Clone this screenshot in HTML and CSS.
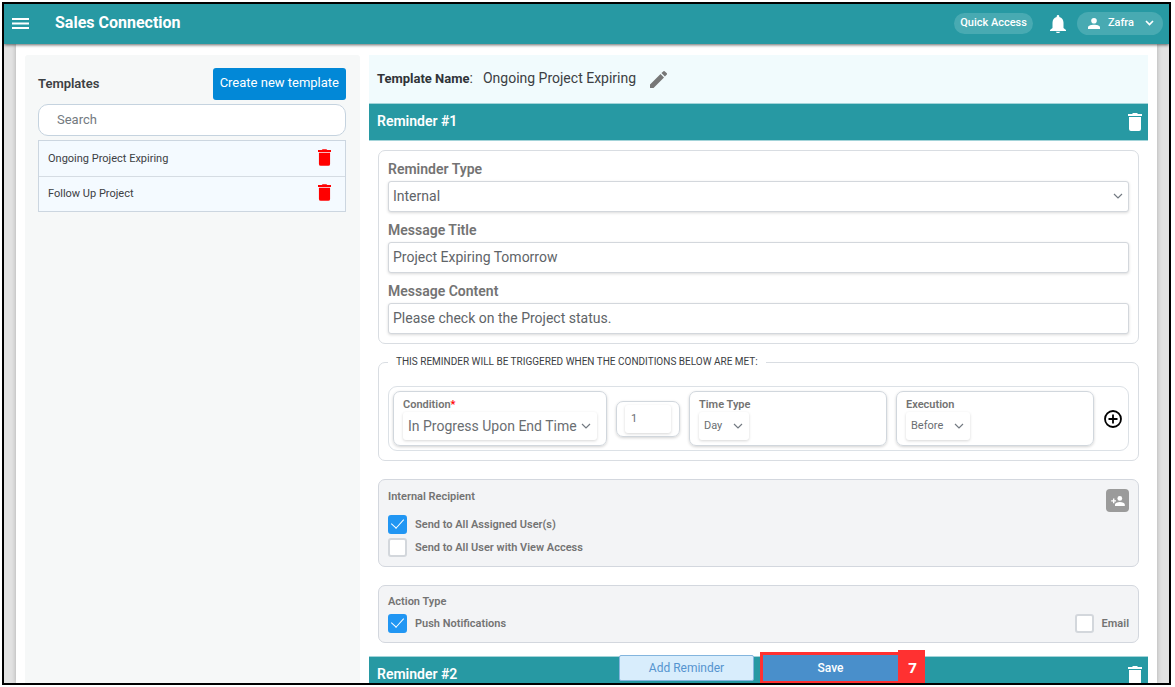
FILE: index.html
```html
<!DOCTYPE html>
<html lang="en">
<head>
<meta charset="utf-8">
<meta name="viewport" content="width=device-width, initial-scale=1">
<title>Sales Connection</title>
<link rel="stylesheet" href="styles.css">
</head>
<body>
<svg class="sprite" aria-hidden="true">
  <symbol id="trash" viewBox="0 0 14 18"><path d="M1 4h12v12a2 2 0 0 1-2 2H3a2 2 0 0 1-2-2zM0 1h4l1-1h4l1 1h4v2H0z"/></symbol>
  <symbol id="chevron" viewBox="0 0 10 6"><path d="M1 1l4 4 4-4" fill="none" stroke="currentColor" stroke-width="1.2"/></symbol>
</svg>
<div class="frame">
  <header class="topbar">
    <button class="icon-btn" aria-label="Menu"><svg width="17" height="11" viewBox="0 0 17 11"><path d="M0 0h17v2H0zM0 4.500h17v2H0zM0 9h17v2H0z"/></svg></button>
    <h1 class="brand">Sales Connection</h1>
    <button class="pill quick">Quick Access</button>
    <button class="icon-btn bell" aria-label="Notifications"><svg width="16" height="18" viewBox="0 0 16 18"><path d="M8 0c.8 0 1.300.6 1.300 1.400v.6C12 2.600 13.500 5 13.500 7.700V13L16 15v1H0v-1l2.500-2V7.700C2.500 5 4 2.600 6.700 2v-.6C6.700.6 7.200 0 8 0zM5.800 16.700h4.400c-.2.800-1.100 1.300-2.200 1.300s-2-.5-2.200-1.300z"/></svg></button>
    <button class="pill user">
      <svg width="12" height="11" viewBox="0 0 12 11"><circle cx="6" cy="2.800" r="2.800"/><path d="M0 11V9.500C0 7.500 3 6.700 6 6.700s6 .8 6 2.800V11z"/></svg>
      <span>Zafra</span>
      <svg class="caret" width="9" height="6" viewBox="0 0 9 6"><path d="M1 1l3.500 3.500L8 1" fill="none" stroke="currentColor" stroke-width="1.700"/></svg>
    </button>
  </header>

  <div class="page">
    <aside class="sidebar">
      <div class="sidebar-head">
        <h2 class="sidebar-title">Templates</h2>
        <button class="create">Create new template</button>
      </div>
      <input class="search" type="search" placeholder="Search" aria-label="Search templates">
      <ul class="templates">
        <li class="template"><span>Ongoing Project Expiring</span><button class="icon-btn danger" aria-label="Delete Ongoing Project Expiring"><svg width="13" height="17" viewBox="0 0 13 17"><use href="#trash" width="13" height="17"/></svg></button></li>
        <li class="template"><span>Follow Up Project</span><button class="icon-btn danger" aria-label="Delete Follow Up Project"><svg width="13" height="17" viewBox="0 0 13 17"><use href="#trash" width="13" height="17"/></svg></button></li>
      </ul>
    </aside>

    <main class="main">
      <div class="name-bar">
        <p class="name"><b>Template Name</b>:</p>
        <span class="name-value">Ongoing Project Expiring</span>
        <button class="icon-btn edit" aria-label="Edit name"><svg width="17" height="17" viewBox="0 0 17 17"><path d="M0 13.500L10.500 3 14 6.500 3.500 17H0zM11.400 2.100L13.200.4a1.200 1.200 0 0 1 1.700 0l1.700 1.700a1.200 1.200 0 0 1 0 1.700l-1.700 1.800z"/></svg></button>
      </div>

      <section>
        <div class="reminder-bar"><h2 class="reminder-title">Reminder #1</h2><button class="icon-btn" aria-label="Delete reminder 1"><svg width="14" height="18"><use href="#trash"/></svg></button></div>
        <div class="reminder-body">
          <div class="card form">
            <label class="label" for="type">Reminder Type</label>
            <div class="select-wrap"><select class="field" id="type"><option>Internal</option></select><svg class="arrow" width="10" height="6"><use href="#chevron"/></svg></div>
            <label class="label" for="msg-title">Message Title</label>
            <input class="field" id="msg-title" value="Project Expiring Tomorrow">
            <label class="label" for="content">Message Content</label>
            <input class="field" id="content" value="Please check on the Project status.">
          </div>

          <fieldset class="conditions">
            <legend class="legend">THIS REMINDER WILL BE TRIGGERED WHEN THE CONDITIONS BELOW ARE MET:</legend>
            <div class="condition-row">
              <div class="box condition">
                <label class="small-label" for="condition">Condition<span class="required">*</span></label>
                <div class="select-wrap"><select class="mini large" id="condition"><option>In Progress Upon End Time</option></select><svg class="arrow" width="10" height="6"><use href="#chevron"/></svg></div>
              </div>
              <div class="box count"><input class="number" value="1" aria-label="Amount"></div>
              <div class="box grow">
                <label class="small-label" for="time">Time Type</label>
                <div class="select-wrap"><select class="mini" id="time"><option>Day</option></select><svg class="arrow" width="10" height="6"><use href="#chevron"/></svg></div>
              </div>
              <div class="box grow">
                <label class="small-label" for="execution">Execution</label>
                <div class="select-wrap"><select class="mini" id="execution"><option>Before</option></select><svg class="arrow" width="10" height="6"><use href="#chevron"/></svg></div>
              </div>
              <button class="icon-btn add" aria-label="Add condition"><svg width="18" height="18" viewBox="0 0 18 18"><path d="M9 1a8 8 0 1 0 0 16A8 8 0 1 0 9 1zM9 4.500v9M4.500 9h9" fill="none" stroke="currentColor" stroke-width="1.800"/></svg></button>
            </div>
          </fieldset>

          <div class="card shaded recipients">
            <div class="card-head">
              <h3 class="card-title">Internal Recipient</h3>
              <button class="add-user" aria-label="Add recipient"><svg width="14" height="10" viewBox="0 0 14 10"><circle cx="8.800" cy="2.400" r="2.400"/><path d="M4 10V8.500c0-1.800 2.400-2.600 4.900-2.600s4.900.8 4.900 2.600V10zM2 2.500h1.400v1.700H5v1.400H3.400v1.700H2V5.600H.2V4.200H2z"/></svg></button>
            </div>
            <label class="check"><input class="tick" type="checkbox" checked>Send to All Assigned User(s)</label>
            <label class="check"><input class="tick" type="checkbox">Send to All User with View Access</label>
          </div>

          <div class="card shaded actions">
            <h3 class="card-title">Action Type</h3>
            <div class="action-row">
              <label class="check"><input class="tick" type="checkbox" checked>Push Notifications</label>
              <label class="check"><input class="tick" type="checkbox">Email</label>
            </div>
          </div>
        </div>
      </section>

      <section>
        <div class="reminder-bar"><h2 class="reminder-title">Reminder #2</h2><button class="icon-btn" aria-label="Delete reminder 2"><svg width="14" height="18"><use href="#trash"/></svg></button></div>
      </section>

      <div class="footer">
        <button class="btn secondary">Add Reminder</button>
        <div class="save-wrap"><button class="btn primary">Save</button><span class="step">7</span></div>
      </div>
    </main>
  </div>
</div>
</body>
</html>
```
FILE: styles.css
```css
* { box-sizing: border-box; }
body {
  margin: 0;
  height: 100vh;
  padding: 2px 4px 2px 2px;
  background: #fff;
  color: #3c4043;
  font: 13px/16px Roboto, "Liberation Sans", sans-serif;
}
h1, h2, h3, p, ul { margin: 0; padding: 0; }
button, input, select { font: inherit; color: inherit; margin: 0; }
button { border: 0; padding: 0; background: none; cursor: pointer; }
svg { display: block; fill: currentColor; }
.sprite { position: absolute; width: 0; height: 0; }
.icon-btn { display: flex; flex: none; }

.frame {
  display: flex;
  flex-direction: column;
  height: 100%;
  border: 2px solid #000;
  overflow: hidden;
  background: #e3e3e3;
}
.topbar {
  position: relative;
  z-index: 1;
  display: flex;
  flex: none;
  align-items: center;
  height: 40px;
  padding: 0 6px 2px 8px;
  background: #2799a3;
  color: #fff;
  box-shadow: 0 1px 3px rgba(0, 0, 0, .6);
}
.brand { margin-left: 26px; font-size: 16px; line-height: 20px; font-weight: 700; }
.pill {
  display: flex;
  align-items: center;
  border-radius: 12px;
  background: #48aab2;
  font-size: 11px;
  font-weight: 500;
}
.quick { height: 21px; padding: 0 6px; margin-left: auto; }
.bell { margin: 2px 11px 0 17px; }
.user { height: 23px; padding: 0 9px 0 11px; }
.user span { margin: 0 11px 0 8px; }

.page {
  display: grid;
  grid-template-columns: 335px minmax(0, 1fr);
  gap: 9px;
  flex: 1;
  min-height: 0;
  margin: 0 12px;
  padding: 11px 9px 0;
  background: #fff;
  box-shadow: 0 0 5px rgba(0, 0, 0, .25);
}
.sidebar { padding: 13px 14px 0 13px; background: #f6f8f8; border-radius: 3px 3px 0 0; }
.sidebar-head { display: flex; align-items: center; justify-content: space-between; margin-bottom: 4px; }
.sidebar-title { font-size: 13px; font-weight: 600; }
.create { height: 32px; padding: 0 7px 2px; border-radius: 3px; background: #0288d7; color: #fff; font-size: 13px; }
.search {
  display: block;
  width: 100%;
  height: 32px;
  padding: 0 18px 2px;
  border: 1px solid #c5d3df;
  border-radius: 10px;
  background: #fff;
  appearance: none;
  outline: 0;
}
.search::placeholder { color: #737a80; }
.templates { margin-top: 4px; border: 1px solid #ccd6e0; background: #f4faff; list-style: none; }
.template {
  display: flex;
  align-items: center;
  justify-content: space-between;
  height: 35px;
  padding: 0 14px 0 9px;
  font-size: 11px;
}
.template + .template { border-top: 1px solid #d5dce3; }
.danger { color: #f00; padding-bottom: 3px; }

.main { position: relative; min-height: 0; overflow: hidden; }
.name-bar { display: flex; align-items: center; height: 48px; padding: 0 8px 2px; background: #f1fbfd; font-size: 14px; }
.name b { color: #303438; font-size: 13px; }
.name-value { margin-left: 10px; }
.edit { margin-left: 14px; padding-top: 2px; color: #777; }
.reminder-bar {
  display: flex;
  align-items: center;
  justify-content: space-between;
  height: 38px;
  padding: 0 6px 2px 8px;
  border: solid #a3d4d9;
  border-width: 1px 0;
  background: #2799a3;
  color: #fff;
}
.reminder-title { font-size: 14px; font-weight: 600; }
.reminder-bar .icon-btn { padding-top: 2px; }
.reminder-body { padding: 9px 9px 13px; }
.card { border: 1px solid #d9dde2; border-radius: 7px; padding: 0 9px; color: #737373; }
.form { display: flex; flex-direction: column; padding: 8px 9px 9px; }
.label { font-size: 14px; line-height: 20px; font-weight: 600; }
.label:not(:first-child) { margin-top: 8px; }
.select-wrap { position: relative; display: flex; width: fit-content; }
.form .select-wrap { width: 100%; }
.arrow { position: absolute; right: 6px; top: 50%; margin-top: -3px; color: #737a82; pointer-events: none; }
.field {
  width: 100%;
  height: 31px;
  padding: 0 4px 1px;
  margin-top: 2px;
  border: 1px solid #d3d7dc;
  border-radius: 3px;
  background: #fff;
  box-shadow: 0 1px 3px rgba(0, 0, 0, .15);
  color: #606468;
  font-size: 14px;
  appearance: none;
  outline: 0;
}
.conditions { min-width: 0; margin: 10px 0 18px; padding: 16px 9px 9px; border: 1px solid #d9dde2; border-radius: 7px; }
.legend { padding: 0 8px; font-size: 10px; line-height: 16px; }
.condition-row {
  display: flex;
  align-items: center;
  gap: 9px;
  padding: 4px 6px 4px 4px;
  border: 1px solid #dce1e6;
  border-radius: 9px;
}
.box { height: 55px; padding: 6px 9px 4px; border: 1px solid #d1d7dd; border-radius: 7px; box-shadow: 0 1px 3px rgba(0, 0, 0, .18); }
.condition { flex: none; }
.count { display: flex; flex: none; height: 36px; padding: 3px 8px; }
.grow { flex: 1; min-width: 0; }
.small-label { display: block; color: #737373; font-size: 11px; line-height: 14px; font-weight: 600; }
.required { color: #f00; }
.mini, .number {
  height: 28px;
  border: 0;
  border-radius: 3px;
  background: #fff;
  box-shadow: 0 1px 3px rgba(0, 0, 0, .16);
  color: #6a6e72;
  font-size: 11px;
  appearance: none;
  outline: 0;
}
.mini { padding: 0 26px 0 5px; }
.large { padding-right: 20px; font-size: 14px; }
.number { width: 46px; padding: 0 6px; }
.add { margin-left: 1px; color: #000; }
.shaded { background: #f3f4f6; border-color: #d3d7de; }
.card-title { font-size: 11px; font-weight: 600; }
.card-head { display: flex; justify-content: space-between; }
.add-user { display: grid; place-items: center; width: 23px; height: 23px; border-radius: 4px; background: #9b9b9b; color: #fff; }
.recipients { padding-top: 9px; padding-bottom: 7px; margin-bottom: 18px; }
.check { display: flex; align-items: center; gap: 8px; height: 23px; font-size: 11px; font-weight: 600; }
.card-head + .check { margin-top: 1px; }
.tick {
  display: grid;
  place-items: center;
  width: 19px;
  height: 19px;
  border: 2px solid #d3d7dc;
  border-radius: 3px;
  background: #fff;
  appearance: none;
}
.tick:checked { border-color: #2196f3; background: #2196f3; }
.tick:checked::before {
  content: "";
  box-sizing: border-box;
  width: 7px;
  height: 12px;
  margin: -3px 0 2px;
  border: solid #fff;
  border-width: 0 1px 1px 0;
  transform: rotate(42deg);
}
.actions { padding-top: 8px; padding-bottom: 7px; }
.action-row { display: flex; justify-content: space-between; margin-top: 2px; }
.footer { position: absolute; left: 0; right: 0; bottom: 2px; display: flex; justify-content: center; gap: 9px; }
.btn { display: block; width: 135px; height: 26px; border-radius: 2px; font-size: 12px; }
.secondary { border: 1px solid #83b5de; background: #d8edfc; color: #5594cf; }
.save-wrap { position: relative; }
.primary { background: #498fcb; color: #fff; font-weight: 500; outline: 3px solid #ff3131; border-radius: 0; }
.step {
  position: absolute;
  left: 100%;
  bottom: -3px;
  display: grid;
  place-items: center;
  width: 27px;
  height: 34px;
  padding-left: 2px;
  background: #ff3131;
  color: #fff;
  font: 700 15px/20px "Open Sans", sans-serif;
}
```
